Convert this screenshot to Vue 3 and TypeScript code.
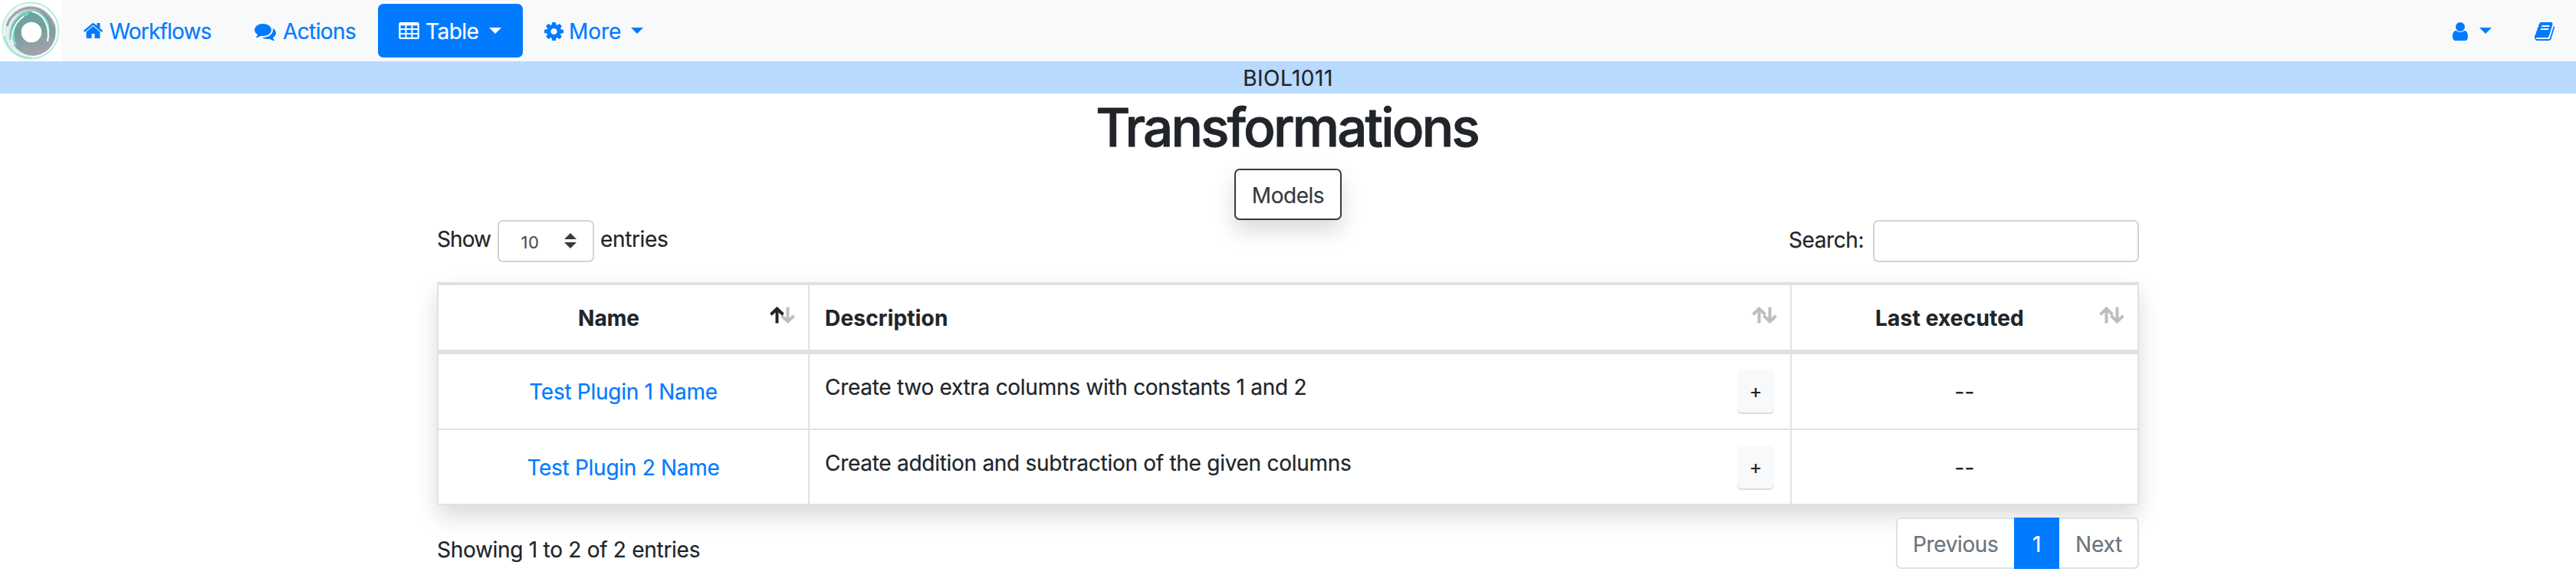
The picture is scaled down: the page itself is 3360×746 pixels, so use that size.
<script setup lang="ts">
interface Plugin {
  name: string
  description: string
  executed: string
}

const plugins: Plugin[] = [
  { name: 'Test Plugin 1 Name', description: 'Create two extra columns with constants 1 and 2', executed: '--' },
  { name: 'Test Plugin 2 Name', description: 'Create addition and subtraction of the given columns', executed: '--' },
]

const columns = [
  { key: 'name', label: 'Name', sorted: true },
  { key: 'description', label: 'Description', sorted: false },
  { key: 'executed', label: 'Last executed', sorted: false },
]
</script>

<template>
  <div class="page">
    <nav class="navbar">
      <svg class="logo" viewBox="0 0 80 80">
        <defs>
          <linearGradient id="core" x1="0" y1="0" x2="0.25" y2="1">
            <stop offset="0" stop-color="#6aa69f" />
            <stop offset="0.55" stop-color="#74a09b" />
            <stop offset="1" stop-color="#a3a1ab" />
          </linearGradient>
          <linearGradient id="rim" x1="0" y1="0" x2="1" y2="0.3">
            <stop offset="0" stop-color="#c9ece4" />
            <stop offset="1" stop-color="#a5a3ad" />
          </linearGradient>
          <filter id="soft" x="-10%" y="-10%" width="120%" height="120%"><feGaussianBlur stdDeviation="0.7" /></filter>
        </defs>
        <rect width="80" height="80" fill="#fff" />
        <g filter="url(#soft)" fill="none">
          <circle cx="40" cy="40" r="36.500" stroke="#b9ebde" stroke-width="2" />
          <circle cx="39" cy="40" r="33" fill="#e3eeec" />
          <path d="M10 30A33 33 0 0 1 72 33C76 55 60 72 40 73C62 64 68 43 57 27C44 11 21 15 10 30Z" fill="url(#rim)" />
          <circle cx="43" cy="43" r="29.500" fill="url(#core)" />
          <path d="M9 34A33 33 0 0 1 41 10A29 29 0 0 1 69 36" stroke="#a09ea8" stroke-width="3" />
          <path d="M6 47A34 34 0 0 0 41 75" stroke="#8fe5d0" stroke-width="1.600" />
          <path d="M13 52C11 31 25 15 42 14.500C55 15 64 27 64 41" stroke="#80d9c7" stroke-width="2" />
          <path d="M37 17.500C20 25 13 43 21 59" stroke="#79dfca" stroke-width="2" />
          <path d="M31 21C17 31 12 46 18 58" stroke="#f4fffc" stroke-width="1.800" />
          <path d="M42 15C57 18 66 34 62 54" stroke="#effffa" stroke-width="2.200" />
        </g>
        <circle cx="41" cy="42" r="13.300" fill="#fff" />
      </svg>

      <a class="nav-item workflows">
        <svg class="icon" width="25" height="20" viewBox="89 253 1614 1283" preserveAspectRatio="none"><path fill="currentColor" d="M1472 992v480q0 26-19 45t-45 19h-384v-384h-256v384h-384q-26 0-45-19t-19-45v-480q0-1 .5-3t.5-3l575-474 575 474q1 2 1 6zm223-69l-62 74q-8 9-21 11h-3q-13 0-21-7l-692-577-692 577q-12 8-24 7-13-2-21-11l-62-74q-8-10-7-23.500t11-21.500l719-599q32-26 76-26t76 26l244 204v-195q0-14 9-23t23-9h192q14 0 23 9t9 23v408l219 182q10 8 11 21.500t-7 23.500z" /></svg>
        <span class="label">Workflows</span>
      </a>
      <a class="nav-item actions">
        <svg class="icon" width="28" height="22" viewBox="0 256 1792 1408"><path fill="currentColor" d="M1408 768q0 139-94 257t-256.500 186.500-353.500 68.500q-86 0-176-16-124 88-278 128-36 9-86 16h-3q-11 0-20.500-8t-11.500-21q-1-3-1-6.500t.5-6.500 2-6l2.500-5 3.500-5.500 4-5 4.500-5 4-4.500q5-6 23-25t26-29.500 22.500-29 25-38.500 20.500-44q-124-72-195-177t-71-224q0-139 94-257t256.500-186.500 353.500-68.500 353.500 68.500 256.500 186.500 94 257zm384 256q0 120-71 224.500t-195 176.500q10 24 20.500 44t25 38.500 22.500 29 26 29.500 23 25q1 1 4 4.500t4.500 5 4 5 3.500 5.500l2.500 5 2 6 .5 6.500-1 6.500q-3 14-13 22t-22 7q-50-7-86-16-154-40-278-128-90 16-176 16-271 0-472-132 58 4 88 4 161 0 309-45t264-129q125-92 192-212t67-254q0-77-23-152 129 71 204 178t75 230z" /></svg>
        <span class="label">Actions</span>
      </a>
      <a class="nav-item table-item active">
        <svg class="icon" width="27" height="22" viewBox="0 0 27 22"><path fill="currentColor" fill-rule="evenodd" d="M2.500 0H24.500A2.300 2.300 0 0 1 26.800 2.300V19.700A2.300 2.300 0 0 1 24.500 22H2.500A2.300 2.300 0 0 1 .2 19.700V2.300A2.300 2.300 0 0 1 2.500 0ZM2.500 4.200V8H8.500V4.200ZM10.400 4.200V8H16.500V4.200ZM18.400 4.200V8H24.600V4.200ZM2.500 10.100V13.900H8.500V10.100ZM10.400 10.100V13.900H16.500V10.100ZM18.400 10.100V13.900H24.600V10.100ZM2.500 16V19.800H8.500V16ZM10.400 16V19.800H16.500V16ZM18.400 16V19.800H24.600V16Z" /></svg>
        <span class="label">Table</span>
        <span class="caret"></span>
      </a>
      <a class="nav-item more">
        <svg class="icon" width="25" height="24" viewBox="128 128 1536 1536" preserveAspectRatio="none"><path fill="currentColor" d="M1152 896q0-106-75-181t-181-75-181 75-75 181 75 181 181 75 181-75 75-181zm512-109v222q0 12-8 23t-20 13l-185 28q-19 54-39 91 35 50 107 138 10 12 10 25t-9 23q-27 37-99 108t-94 71q-12 0-26-9l-138-108q-44 23-91 38-16 136-29 186-7 28-36 28h-222q-14 0-24.500-8.500t-11.500-21.500l-28-184q-49-16-90-37l-141 107q-10 9-25 9-14 0-25-11-126-114-165-168-7-10-7-23 0-12 8-23 15-21 51-66.500t54-70.500q-27-50-41-99l-183-27q-13-2-21-12.500t-8-23.500v-222q0-12 8-23t19-13l186-28q14-46 39-92-40-57-107-138-10-12-10-24 0-10 9-23 26-36 98.500-107.500t94.500-71.500q13 0 26 10l138 107q44-23 91-38 16-136 29-186 7-28 36-28h222q14 0 24.500 8.500t11.500 21.500l28 184q49 16 90 37l142-107q9-9 24-9 13 0 25 10 129 119 165 170 7 8 7 22 0 12-8 23-15 21-51 66.500t-54 70.500q26 50 41 98l183 28q13 2 21 12.500t8 23.500z" /></svg>
        <span class="label">More</span>
        <span class="caret"></span>
      </a>

      <div class="nav-right">
        <a class="nav-item user">
          <svg class="icon" width="20" height="24" viewBox="0 0 20 24"><circle cx="10" cy="6" r="6" fill="currentColor" /><path fill="currentColor" d="M4.600 11.100Q10 14.900 15.400 11.100C19 11.300 20 15 20 19C20 22.300 18.500 24 16 24H4C1.500 24 0 22.300 0 19C0 15 1 11.300 4.600 11.100Z" /></svg>
          <span class="caret"></span>
        </a>
        <a class="nav-item book">
          <svg class="icon" width="26" height="24" viewBox="64 128 1666 1536"><path fill="currentColor" d="M1703 478q40 57 18 129l-275 906q-19 64-76.500 107.500t-122.500 43.500h-923q-77 0-148.500-53.500t-99.500-131.500q-24-67-2-127 0-4 3-27t4-37q1-8-3-21.500t-3-19.500q2-11 8-21t16.500-23.500 16.500-23.500q23-38 45-91.500t30-91.500q3-10 .5-30t-.5-28q3-11 17-28t17-23q21-36 42-92t25-90q1-9-2.500-32t.5-28q4-13 22-30.500t22-22.500q19-26 42.500-84.500t27.500-96.500q1-8-3-25.500t-2-26.500q2-8 9-18t18-23 17-21q8-12 16.500-30.500t15-35 16-36 19.500-32 26.500-23.500 36-11.500 47.500 5.500l-1 3q38-9 51-9h761q74 0 114 56t18 130l-274 906q-36 119-71.500 153.500t-128.500 34.500h-869q-27 0-38 15-11 16-1 43 24 70 144 70h923q29 0 56-15.500t35-41.500l300-987q7-22 5-57 38 15 59 43zm-1064 2q-4 13 2 22.500t20 9.500h608q13 0 25.500-9.500t16.500-22.500l21-64q4-13-2-22.500t-20-9.500h-608q-13 0-25.500 9.500t-16.500 22.500zm-83 256q-4 13 2 22.500t20 9.500h608q13 0 25.500-9.500t16.500-22.500l21-64q4-13-2-22.500t-20-9.500h-608q-13 0-25.500 9.500t-16.500 22.500z" /></svg>
        </a>
      </div>
    </nav>

    <div class="context">BIOL1011</div>
    <h1>Transformations</h1>
    <div class="toolbar"><button class="models">Models</button></div>

    <main class="content">
      <div class="controls">
        <label class="length">
          <span class="show">Show</span>
          <span class="select">
            <span>10</span>
            <svg width="16" height="20" viewBox="0 0 16 20"><path fill="#343a40" d="M0 8L8 0L16 8ZM0 12H16L8 20Z" /></svg>
          </span>
          <span class="entries">entries</span>
        </label>
        <label class="search"><span>Search:</span><input type="text" /></label>
      </div>

      <div class="table">
        <div class="row head">
          <div v-for="col in columns" :key="col.key" class="cell" :class="col.key">
            <span>{{ col.label }}</span>
            <svg class="sort" width="33" height="22" viewBox="0 0 33 22" fill="none" stroke-width="4">
              <g class="arrow"><path d="M23.500 .5V19M15.500 11.800L23.500 19.400L31.500 11.800" /></g>
              <g :class="{ on: col.sorted }" class="arrow"><path d="M9.500 21.500V3M1.500 10.200L9.500 2.600L17.500 10.200" /></g>
            </svg>
          </div>
        </div>
        <div v-for="plugin in plugins" :key="plugin.name" class="row body">
          <div class="cell name"><a>{{ plugin.name }}</a></div>
          <div class="cell description">
            <span>{{ plugin.description }}</span>
            <button class="expand">+</button>
          </div>
          <div class="cell executed"><span>{{ plugin.executed }}</span></div>
        </div>
      </div>

      <div class="footer">
        <div class="info">Showing 1 to 2 of 2 entries</div>
        <div class="pagination">
          <a class="prev">Previous</a>
          <a class="current">1</a>
          <a class="next">Next</a>
        </div>
      </div>
    </main>
  </div>
</template>

<style>
body {
  margin: 0;
  background: #fff;
}
</style>

<style scoped>
* {
  box-sizing: border-box;
}
.page {
  height: 746px;
  overflow: hidden;
  font: 400 28px/42px Inter, "Liberation Sans", sans-serif;
  color: #212529;
  letter-spacing: -0.28px;
  white-space: nowrap;
  -webkit-text-stroke: 0.2px;
}
.navbar {
  display: flex;
  align-items: center;
  height: 80px;
  background: #f8f9fa;
  color: #007bff;
}
.logo {
  width: 80px;
  height: 80px;
}
.icon {
  flex: none;
}
.nav-item {
  display: flex;
  align-items: center;
  height: 70px;
  border-radius: 7px;
}
.workflows {
  width: 224px;
  padding-left: 28.5px;
  letter-spacing: -0.83px;
}
.workflows .label {
  margin-left: 9px;
}
.actions {
  width: 189px;
  padding-left: 28px;
  letter-spacing: -0.6px;
}
.actions .icon {
  margin-top: 4px;
}
.actions .label {
  margin-left: 9px;
}
.table-item {
  width: 189px;
  padding-left: 27px;
  letter-spacing: -0.54px;
}
.table-item .label {
  width: 83px;
  margin-left: 8px;
}
.active {
  background: #007bff;
  color: #fff;
}
.more {
  width: 185px;
  padding-left: 28px;
  letter-spacing: -0.05px;
}
.more .icon,
.user .icon,
.book .icon {
  margin-top: 2px;
}
.more .label {
  width: 81px;
  margin-left: 7px;
}
.label {
  padding-top: 1px;
}
.caret {
  border: 8px solid transparent;
  border-top-color: currentColor;
  border-bottom: 0;
}
.nav-right {
  display: flex;
  gap: 56px;
  margin-left: auto;
  padding-right: 28px;
}
.user {
  gap: 15px;
}
.context {
  height: 42px;
  padding-top: 1px;
  background: #b8daff;
  text-align: center;
  letter-spacing: 0.5px;
}
h1 {
  height: 84px;
  margin: 2px 0 0;
  padding-right: 3px;
  font-size: 69px;
  font-weight: 500;
  line-height: 84px;
  letter-spacing: -2.8px;
  text-align: center;
  -webkit-text-stroke: 0.9px;
}
.toolbar {
  display: flex;
  justify-content: center;
  height: 79px;
  padding-top: 12px;
}
.models {
  width: 140px;
  height: 67px;
  padding: 3px 0 0;
  border: 2px solid #343a40;
  border-radius: 7px;
  background: #fff;
  color: #343a40;
  font: inherit;
  letter-spacing: -0.47px;
  box-shadow: 0 14px 28px rgba(0, 0, 0, 0.15);
}
.content {
  width: 2220px;
  margin: 0 auto;
}
.controls {
  display: flex;
  justify-content: space-between;
  height: 81px;
}
.length,
.search {
  display: flex;
  height: 55px;
}
.show {
  width: 79px;
  padding-top: 4px;
  letter-spacing: -0.93px;
}
.select {
  display: flex;
  justify-content: space-between;
  width: 126px;
  padding: 0 21px 0 28.5px;
  border: 2px solid #ced4da;
  border-radius: 7px;
  color: #495057;
  font-size: 22px;
  line-height: 54px;
  letter-spacing: 0.6px;
}
.select svg {
  margin-top: 15px;
}
.entries {
  margin-left: 8px;
  padding-top: 4px;
  letter-spacing: -0.35px;
}
.search span {
  width: 110px;
  padding-top: 5px;
  letter-spacing: -0.4px;
}
.search input {
  width: 347px;
  height: 55px;
  padding: 0 14px;
  border: 2px solid #ced4da;
  border-radius: 7px;
  background: #fff;
}
.table {
  display: grid;
  grid-template-rows: 94px 99px 98px;
  width: 2220px;
  border-left: 2px solid #dee2e6;
  background: #fff;
  box-shadow: 0 14px 28px rgba(0, 0, 0, 0.15);
}
.row {
  display: grid;
  grid-template-columns: 484px 1281px 453px;
  border-bottom: 2px solid #dee2e6;
}
.head {
  border-top: 4px solid #dee2e6;
  border-bottom-width: 6px;
  font-weight: 700;
}
.cell {
  display: flex;
  align-items: center;
  border-right: 2px solid #dee2e6;
}
.head .cell {
  padding: 1px 17px 0 20px;
}
.head .cell span {
  flex: 1;
}
.head .cell.name {
  padding-left: 12px;
  text-align: center;
  letter-spacing: 0;
}
.head .description {
  letter-spacing: 0.2px;
}
.head .cell.executed {
  padding-left: 11px;
  text-align: center;
  letter-spacing: 0.19px;
}
.sort {
  flex: none;
  margin-top: -8px;
}
.arrow {
  stroke: #bdbebf;
}
.arrow.on {
  stroke: #212529;
}
.body .name,
.body .executed {
  justify-content: center;
  padding-top: 1px;
}
.body .executed {
  letter-spacing: 0.1px;
}
.name a {
  color: #007bff;
}
.body .description {
  justify-content: space-between;
  padding: 0 21px 0 20px;
}
.body .description span {
  margin-top: -11px;
}
.expand {
  width: 48px;
  height: 55px;
  padding: 0;
  border: 0;
  border-radius: 6px;
  background: #f8f9fa;
  color: #212529;
  font: 400 25px/55px Inter, "Liberation Sans", sans-serif;
  box-shadow: 0 2px 0 rgba(0, 0, 0, 0.14);
}
.footer {
  display: flex;
  justify-content: space-between;
  align-items: flex-start;
  padding-top: 16px;
}
.info {
  padding-top: 21px;
}
.pagination {
  display: flex;
  width: 317px;
  height: 67px;
  border: 2px solid #dee2e6;
  border-radius: 7px;
  background: #fff;
  color: #6c757d;
  line-height: 66px;
}
.prev {
  width: 152px;
  padding-left: 20px;
  letter-spacing: -0.37px;
}
.current {
  width: 59px;
  height: 67px;
  margin-top: -2px;
  padding-top: 2px;
  background: #007bff;
  color: #fff;
  text-align: center;
}
.next {
  padding-left: 21px;
  letter-spacing: -0.2px;
}
</style>
